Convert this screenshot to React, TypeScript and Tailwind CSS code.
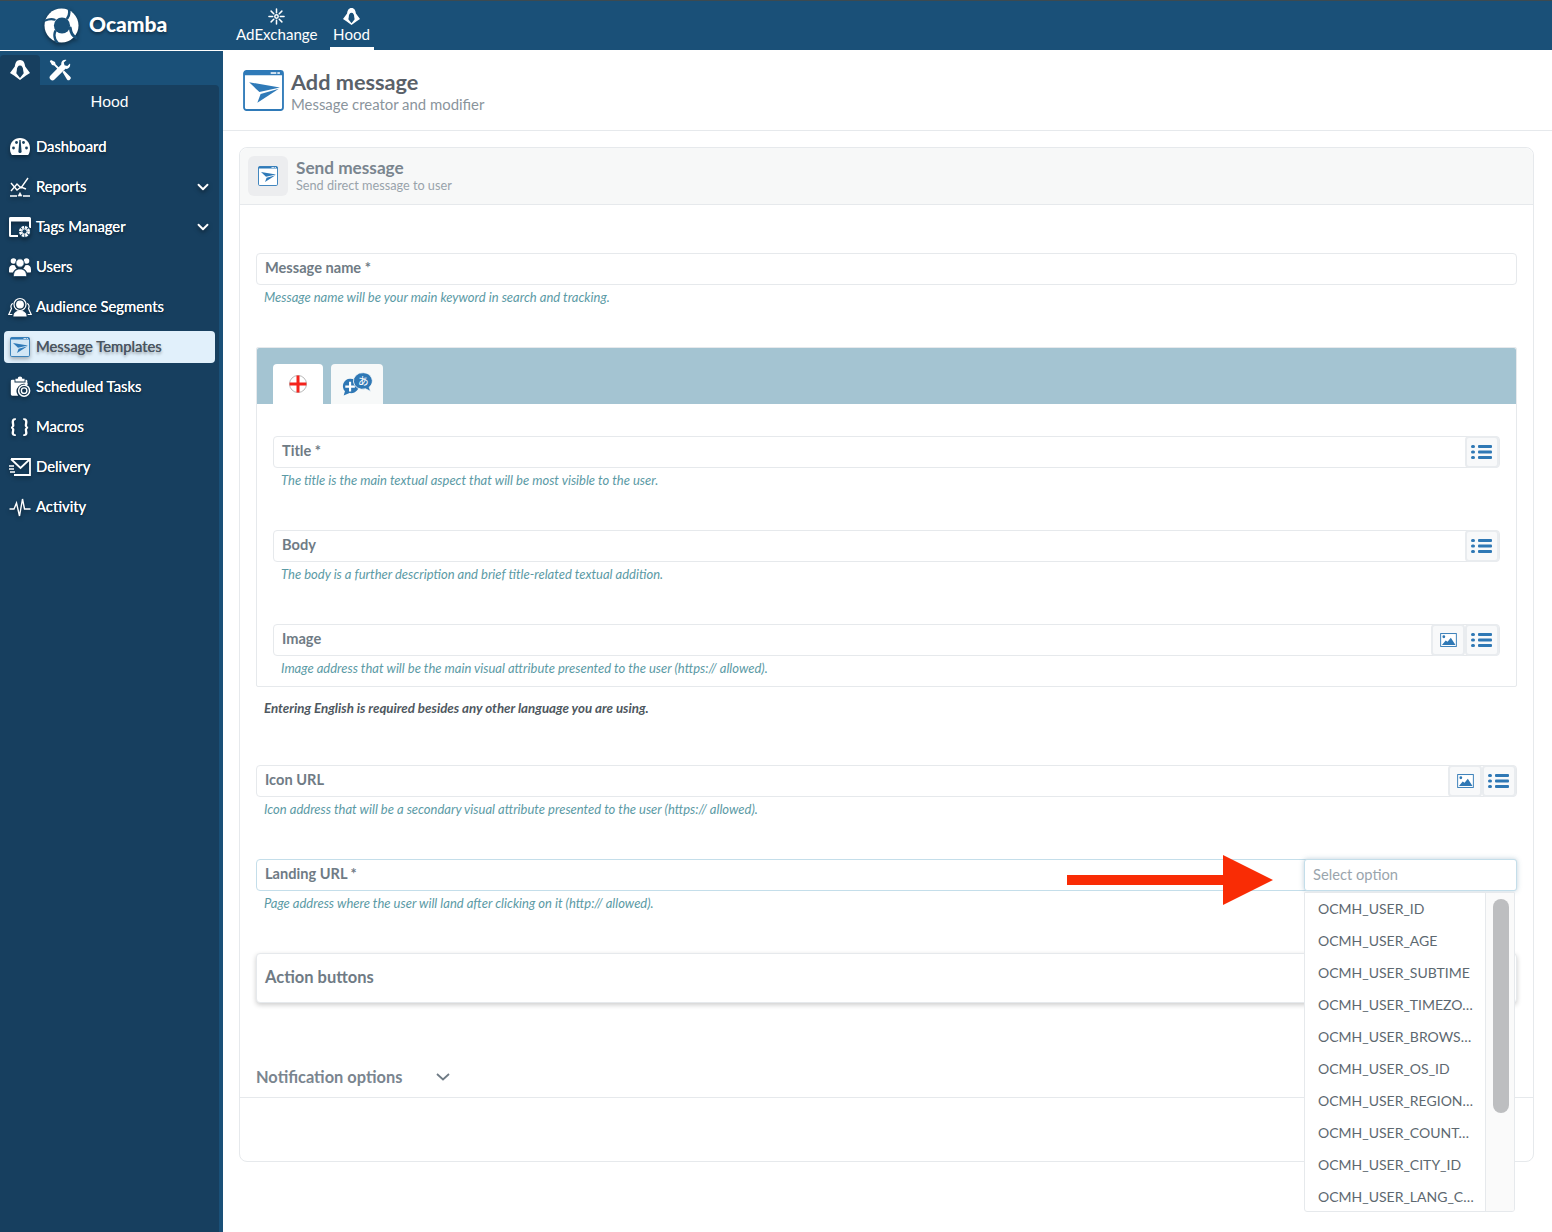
import { ChevronDown } from "lucide-react"
import { ReactNode } from "react"

function HoodIcon({ className = "", face = "#1a5078" }: { className?: string; face?: string }) {
  return (
    <svg viewBox="0 0 20 20" className={className}>
      <path fill="currentColor" d="M10 0C6.600 0 5.300 2.800 4.800 6.500L0 13l4 2.500L10 20l6-4.500 4-2.500-4.800-6.500C14.700 2.800 13.400 0 10 0Z" />
      <path fill={face} d="M10 5.500C8 5.500 6.800 7.500 6.800 10.500L6.300 13.300 10 18l3.700-4.700-.5-2.800C13.200 7.500 12 5.500 10 5.500Z" />
    </svg>
  )
}

function Logo() {
  const bg = "#1a5078"
  return (
    <svg viewBox="0 0 36 36" className="h-[35px] w-[35px] drop-shadow-[0_2px_2px_rgba(0,0,0,0.45)]">
      <circle cx="18" cy="18" r="17.500" fill="#fff" />
      <circle cx="18.500" cy="18" r="8.300" fill={bg} />
      <g fill="none" stroke={bg} strokeLinecap="round">
        <path d="M11 12C8.500 11 5.500 11 1 13" strokeWidth="2.200" />
        <path d="M24 10.500C26 7.500 26.500 4 25.500 1" strokeWidth="2.600" />
        <path d="M27 20.500C27.500 25 29.500 29 33 30.500" strokeWidth="3" />
        <path d="M11.500 24C10 28 11 33 14 36" strokeWidth="2.600" />
      </g>
    </svg>
  )
}

function SendWindow({ className = "", color = "#2f7ab8", fill = "#fff" }: { className?: string; color?: string; fill?: string }) {
  return (
    <svg viewBox="0 0 40 40" className={className}>
      <rect x="1" y="1" width="38" height="38" rx="2.500" fill={fill} stroke={color} strokeWidth="1.800" />
      <path fill={color} d="M1 2.500A1.500 1.500 0 0 1 2.500 1h35A1.500 1.500 0 0 1 39 2.500V5H1Z" />
      <rect x="27" y="2.200" width="5.500" height="1.500" fill="#fff" />
      <rect x="33.500" y="2.200" width="2.500" height="1.500" fill="#fff" />
      <path fill={color} d="M6 12 36 17 16 21.500Z" />
      <path fill={color} d="M14 32 17.200 23.500 35 18.300Z" />
    </svg>
  )
}

function ListIcon() {
  return (
    <svg viewBox="0 0 22 16" className="h-4 w-[22px] text-[#2f78b5]">
      <g fill="currentColor">
        <rect x="0" y="1" width="4" height="3" rx="1.500" />
        <rect x="0" y="6.500" width="4" height="3" rx="1.500" />
        <rect x="0" y="12" width="4" height="3" rx="1.500" />
        <rect x="7" y="1" width="14" height="3" rx="1" />
        <rect x="7" y="6.500" width="14" height="3" rx="1" />
        <rect x="7" y="12" width="14" height="3" rx="1" />
      </g>
    </svg>
  )
}

function ImageIcon() {
  return (
    <svg viewBox="0 0 18 15" className="h-[14px] w-[17px]">
      <rect x=".6" y=".6" width="16.800" height="13.800" fill="#fff" stroke="#2f78b5" strokeWidth="1" />
      <circle cx="4" cy="4" r="1.500" fill="#2f78b5" />
      <path fill="#2f78b5" d="M2 12.800 6 8l2 1.500L11.500 5l5 7.800Z" />
    </svg>
  )
}

function IconButton({ children }: { children: ReactNode }) {
  return (
    <div className="flex h-[32px] w-[34px] shrink-0 items-center justify-center rounded-[4px] border-2 border-[#e9ecef] bg-[#f8f9fa]">
      {children}
    </div>
  )
}

function Field({ label, help, image, list, strong }: { label: string; help: string; image?: boolean; list?: boolean; strong?: boolean }) {
  return (
    <div>
      <div className={`flex h-[32px] items-center rounded-[4px] border ${strong ? "border-[#c4deea]" : "border-[#e6e9ec]"} bg-white`}>
        <span className="flex-1 pb-[3px] pl-[8px] text-[14.600px] font-bold text-[#6f7b85]">{label}</span>
        {image && <IconButton><ImageIcon /></IconButton>}
        {list && <IconButton><ListIcon /></IconButton>}
      </div>
      <p className="mt-[5px] pl-[8px] text-[13px] leading-[15px] text-[#5b9aa5] italic">{help}</p>
    </div>
  )
}

const ic = "h-[22px] w-[22px] shrink-0 drop-shadow-[0_2px_2px_rgba(0,0,0,0.4)]"

const navItems: { label: string; chevron?: boolean; active?: boolean; icon: ReactNode }[] = [
  {
    label: "Dashboard",
    icon: (
      <svg viewBox="0 0 22 20" className={ic}>
        <path fill="#fff" d="M11 1C5 1 1 5.600 1 11.500c0 2.500.6 4.500 1.500 6 .3.400.7.500 1.100.500h14.800c.4 0 .8-.1 1.100-.5.900-1.500 1.500-3.500 1.500-6C21 5.600 17 1 11 1Z" />
        <g fill="#17405f">
          <circle cx="4.500" cy="11" r="1.400" />
          <circle cx="7.500" cy="5.500" r="1.400" />
          <circle cx="14.500" cy="5.500" r="1.400" />
          <circle cx="17.500" cy="11" r="1.400" />
          <path d="M10.400 3h1.200l1 11.500a1.600 1.600 0 1 1-3.200 0Z" />
        </g>
      </svg>
    ),
  },
  {
    label: "Reports",
    chevron: true,
    icon: (
      <svg viewBox="0 0 22 22" className={ic} fill="none" stroke="#fff" strokeWidth="1.400">
        <path d="M2 15l6-7 4 4 7-10" />
        <path d="M2 7l6 7 4-3 5 2" />
        <path d="M1 20h7M14 20h7" strokeWidth="1.600" />
        <path d="M11 16.500 13 20H9Z" fill="#fff" strokeWidth=".6" />
      </svg>
    ),
  },
  {
    label: "Tags Manager",
    chevron: true,
    icon: (
      <svg viewBox="0 0 22 22" className={ic}>
        <path fill="#fff" d="M1.500 1h19A1.500 1.500 0 0 1 22 2.500V12h-2V5.500H2V19h7v2H1.500A1.500 1.500 0 0 1 0 19.500v-17A1.500 1.500 0 0 1 1.500 1Z" />
        <circle cx="15.500" cy="15.500" r="6.500" fill="#17405f" />
        <circle cx="15.500" cy="15.500" r="4.200" fill="none" stroke="#fff" strokeWidth="2.600" strokeDasharray="2.400 .9" />
        <circle cx="15.500" cy="15.500" r="2.600" fill="none" stroke="#fff" strokeWidth="1" />
      </svg>
    ),
  },
  {
    label: "Users",
    icon: (
      <svg viewBox="0 0 22 20" className={ic} fill="#fff">
        <path d="M0 12.500C0 9.500 1.500 8 4 8c.8 0 1.500.2 2 .5.200 1.300 1 2.400 1.800 3-1.800.9-3.200 2.200-3.800 4H1c-.6 0-1-.4-1-1ZM22 12.500C22 9.500 20.500 8 18 8c-.8 0-1.500.2-2 .5-.2 1.300-1 2.400-1.800 3 1.800.9 3.200 2.200 3.800 4h3c.6 0 1-.4 1-1Z" />
        <circle cx="4.500" cy="4" r="2.800" />
        <circle cx="17.500" cy="4" r="2.800" />
        <circle cx="11" cy="6" r="4.200" stroke="#17405f" strokeWidth="1" />
        <path d="M4.500 18.500c0-4 2.500-6.500 6.500-6.500s6.500 2.500 6.500 6.500c0 .8-.5 1-1 1h-11c-.5 0-1-.2-1-1Z" stroke="#17405f" strokeWidth=".8" />
      </svg>
    ),
  },
  {
    label: "Audience Segments",
    icon: (
      <svg viewBox="0 0 24 20" className="h-[22px] w-[24px] shrink-0 drop-shadow-[0_2px_2px_rgba(0,0,0,0.4)]" fill="none" stroke="#fff" strokeWidth="1.200">
        <circle cx="12" cy="7.500" r="6" />
        <circle cx="12" cy="7.500" r="3.300" fill="#fff" />
        <path d="M6 19c0-3 2.500-5 6-5s6 2 6 5Z" fill="#fff" />
        <path d="M5 6.500C2.800 7 2.500 10 3.500 11.500L0.800 17.500h3.500M19 6.500c2.200.5 2.500 3.500 1.500 5l2.700 6h-3.500" />
      </svg>
    ),
  },
  {
    label: "Message Templates",
    active: true,
    icon: <SendWindow fill="#d3e7f5" className="h-[20px] w-[20px] shrink-0 drop-shadow-[0_2px_2px_rgba(0,0,0,0.3)]" />,
  },
  {
    label: "Scheduled Tasks",
    icon: (
      <svg viewBox="0 0 22 24" className={ic} fill="#fff">
        <path d="M6 3h2.500a2.500 2.500 0 0 1 5 0H16v3H6Z" />
        <path d="M2.500 4H5v3h12V4h.5A1.500 1.500 0 0 1 19 5.500V9.500A8 8 0 0 0 9 21.500H2.500A1.500 1.500 0 0 1 1 20V5.500A1.500 1.500 0 0 1 2.500 4Z" />
        <circle cx="15.500" cy="16" r="6" fill="none" stroke="#fff" strokeWidth="1.700" />
        <circle cx="15.500" cy="16" r="3" fill="none" stroke="#fff" strokeWidth="1.500" />
        <path d="M17 10l2-2" stroke="#fff" strokeWidth="2" />
      </svg>
    ),
  },
  {
    label: "Macros",
    icon: <span className={`${ic} text-center text-[19px] leading-[20px] font-black tracking-[1px] whitespace-nowrap text-white`}>{"{ }"}</span>,
  },
  {
    label: "Delivery",
    icon: (
      <svg viewBox="0 0 22 18" className={ic} fill="none" stroke="#fff" strokeWidth="1.800">
        <path d="M2 1h19v16H5M2 1l9.500 9L21 1" />
        <path d="M0 8h5M0 11h5M1 14h5" strokeWidth="1.400" />
      </svg>
    ),
  },
  {
    label: "Activity",
    icon: (
      <svg viewBox="0 0 22 20" className={ic} fill="none" stroke="#fff" strokeWidth="1.400">
        <path d="M.5 12H5l2.500-6 3 13 3-17 2 10h6" />
      </svg>
    ),
  },
]

function Sidebar() {
  return (
    <aside className="flex w-[223px] shrink-0 flex-col bg-[#1a5078] pr-[4px]">
      <div className="flex h-[34px] shrink-0 items-end">
        <div className="flex h-[30px] w-[40px] items-center justify-center rounded-t-[4px] bg-[#173f5f]">
          <HoodIcon className="h-[20px] w-[20px] text-white" face="#173f5f" />
        </div>
        <div className="flex h-[30px] w-[40px] items-center justify-center">
          <svg viewBox="0 0 22 22" className="h-[22px] w-[22px]" fill="#fff">
            <path d="M2 1 0.800 2.200 3 6l2.200.6 6.300 6.300 1.400-1.400L6.600 5.200 6 3Z" />
            <path d="M13.500 13 15 11.500l6 6a2 2 0 0 1 0 3 2 2 0 0 1-3 0Z" />
            <path d="M21 4.500 18.300 7 15.500 6.300 14.800 3.500 17.500 1C14.800.2 11.800 2 12.300 5.500L1.500 16.500a2.800 2.800 0 0 0 4 4L16.500 9.800C20 10.500 21.800 7.200 21 4.500Z" />
          </svg>
        </div>
      </div>
      <div className="flex-1 rounded-tr-[4px] bg-[#173f5f]">
        <div className="pt-[6px] text-center text-[15.500px] leading-[20px] text-white">Hood</div>
        <nav className="mt-[16px] flex flex-col">
          {navItems.map((item) => (
            <div key={item.label} className="flex h-[40px] items-center">
              <div className={`mx-[4px] flex h-[32px] w-full items-center gap-[5px] rounded-[4px] pr-[3px] pl-[5px] ${item.active ? "bg-[#e1f0fb]" : ""}`}>
                <span className="flex w-[22px] shrink-0 items-center justify-center">{item.icon}</span>
                <span
                  className={`flex-1 pb-[2px] text-[14.800px] ${
                    item.active
                      ? "text-[#4a5560] [text-shadow:0_0_0.6px_#4a5560,0_2px_3px_rgba(0,0,0,0.4)]"
                      : "text-white [text-shadow:0_0_0.6px_#fff,0_2px_3px_rgba(0,0,0,0.45)]"
                  }`}
                >
                  {item.label}
                </span>
                {item.chevron && <ChevronDown className="h-[18px] w-[18px] text-white drop-shadow-[0_2px_2px_rgba(0,0,0,0.5)]" strokeWidth={2.500} />}
              </div>
            </div>
          ))}
        </nav>
      </div>
    </aside>
  )
}

const options = [
  "OCMH_USER_ID",
  "OCMH_USER_AGE",
  "OCMH_USER_SUBTIME",
  "OCMH_USER_TIMEZO…",
  "OCMH_USER_BROWS…",
  "OCMH_USER_OS_ID",
  "OCMH_USER_REGION…",
  "OCMH_USER_COUNT…",
  "OCMH_USER_CITY_ID",
  "OCMH_USER_LANG_C…",
]

function LandingDropdown() {
  return (
    <div className="absolute top-0 right-0 z-10 w-[213px]">
      <div className="flex h-[32px] items-center rounded-[3px] border border-[#c4deea] bg-white pb-[2px] pl-[8px] text-[14.700px] text-[#9aa5ad] shadow-[0_0_5px_rgba(70,120,150,0.35)]">
        Select option
      </div>
      <div className="mt-px flex h-[320px] w-[211px] overflow-hidden rounded-b-[3px] border border-[#e6e9ec] bg-white">
        <ul className="w-[181px] shrink-0 border-r border-[#e6e9ec]">
          {options.map((o) => (
            <li key={o} className="h-[32px] pl-[13px] text-[14px] leading-[32px] whitespace-nowrap text-[#5d6870]">{o}</li>
          ))}
        </ul>
        <div className="flex-1 bg-[#fafafa] pt-[6px] pl-[7px]">
          <div className="h-[214px] w-[16px] rounded-full bg-[#bdbec0]" />
        </div>
      </div>
    </div>
  )
}

function RedArrow() {
  return (
    <div className="absolute top-[-4px] left-[811px] z-20 flex items-center">
      <div className="h-[10px] w-[156px] bg-[#f92c05]" />
      <div className="h-0 w-0 border-y-[25px] border-l-[50px] border-y-transparent border-l-[#f92c05]" />
    </div>
  )
}

export default function App() {
  return (
    <div className="flex h-screen w-full flex-col overflow-hidden bg-white font-['Lato',sans-serif]">
      <header className="flex h-[51px] shrink-0 border-t border-b border-t-[#3d4a50] border-b-white bg-[#1a5078]">
        <div className="flex w-[223px] shrink-0 items-center pl-[44px]">
          <Logo />
          <span className="ml-[10px] pb-[4px] text-[21px] font-black text-white [text-shadow:0_2px_3px_rgba(0,0,0,0.4)]">Ocamba</span>
        </div>
        <div className="ml-[13px] flex gap-[12px]">
          <div className="flex flex-col items-center pt-[7px] text-white">
            <svg viewBox="0 0 18 18" className="h-[17px] w-[17px]" stroke="#fff" strokeWidth="1.600" strokeLinecap="round" fill="none">
              <path d="M9 1v4M9 13v4M1 9h4M13 9h4M3.300 3.300l2.800 2.800M11.900 11.900l2.800 2.800M14.700 3.300l-2.800 2.800M6.100 11.900l-2.800 2.800" />
              <circle cx="9" cy="9" r="1.800" />
            </svg>
            <span className="text-[15.100px] leading-[19px]">AdExchange</span>
          </div>
          <div className="flex w-[44px] flex-col items-center border-b-[3px] border-white pt-[7px] text-white">
            <HoodIcon className="h-[17px] w-[17px]" />
            <span className="text-[15.100px] leading-[19px]">Hood</span>
          </div>
        </div>
      </header>

      <div className="flex min-h-0 flex-1">
        <Sidebar />
        <main className="min-w-0 flex-1">
          <div className="flex h-[80px] items-center gap-[7px] border-b border-[#e6e9ec] pb-[1px] pl-[20px]">
            <SendWindow className="h-[41px] w-[41px]" />
            <div className="pt-[3px]">
              <h1 className="text-[21.700px] leading-[24px] font-bold text-[#5a6169]">Add message</h1>
              <p className="text-[14.900px] leading-[20px] text-[#8a949c]">Message creator and modifier</p>
            </div>
          </div>

          <section className="mt-[16px] mr-[18px] ml-[16px] h-[1015px] rounded-[8px] border border-[#e6e9ec]">
            <div className="flex h-[57px] items-center gap-[8px] rounded-t-[8px] border-b border-[#e6e9ec] bg-[#f7f8f8] pl-[8px]">
              <div className="flex h-[40px] w-[40px] items-center justify-center rounded-[6px] bg-[#ecedef]">
                <SendWindow className="h-[20px] w-[20px]" />
              </div>
              <div className="pb-[2px]">
                <div className="text-[17.200px] leading-[20px] font-bold text-[#7a858f]">Send message</div>
                <div className="text-[12.700px] leading-[15px] text-[#99a3ab]">Send direct message to user</div>
              </div>
            </div>

            <div className="px-[16px] pt-[48px]">
              <Field label="Message name *" help="Message name will be your main keyword in search and tracking." />

              <div className="mt-[42px] rounded-[2px] border border-[#e6e9ec]">
                <div className="flex h-[56px] items-end gap-[8px] rounded-t-[2px] bg-[#a4c4d2] pl-[16px]">
                  <div className="flex h-[40px] w-[50px] items-center justify-center rounded-t-[4px] bg-white">
                    <svg viewBox="0 0 18 18" className="h-[18px] w-[18px]">
                      <circle cx="9" cy="9" r="8.500" fill="#fff" stroke="#999" strokeWidth=".7" />
                      <path d="M7.500 .6h3v6.900h6.900v3h-6.900v6.900h-3v-6.900H.6v-3h6.900Z" fill="#f4231c" />
                    </svg>
                  </div>
                  <div className="flex h-[40px] w-[52px] items-center justify-center rounded-t-[4px] bg-[#f7f9f9]">
                    <svg viewBox="0 0 30 22" className="h-[24px] w-[32px]">
                      <path fill="#2f78b5" d="M8.500 6a8 7 0 0 1 4.500 12.700c-1.500.8-3 1-5 .8L2.500 21.800l1.200-4A7 7 0 0 1 8.500 6Z" />
                      <path fill="#fff" d="M7.500 9h2v3.500H13v2H9.500V18h-2v-3.500H4v-2h3.500Z" />
                      <path fill="#2f78b5" stroke="#f7f9f9" strokeWidth=".8" d="M21 .4a8.500 7.800 0 0 1 5.500 13.600l1.300 4-4.800-2.500A8.500 7.800 0 1 1 21 .4Z" />
                      <text x="21" y="11.500" fill="#fff" fontSize="10" textAnchor="middle" fontFamily="'Noto Sans CJK JP',sans-serif">あ</text>
                    </svg>
                  </div>
                </div>
                <div className="flex flex-col gap-[42px] px-[16px] pt-[32px] pb-[10px]">
                  <Field list label="Title *" help="The title is the main textual aspect that will be most visible to the user." />
                  <Field list label="Body" help="The body is a further description and brief title-related textual addition." />
                  <Field image list label="Image" help="Image address that will be the main visual attribute presented to the user (https:// allowed)." />
                </div>
              </div>

              <p className="mt-[13px] pl-[8px] text-[13.300px] leading-[16px] font-bold text-[#4f5860] italic">
                Entering English is required besides any other language you are using.
              </p>

              <div className="mt-[49px]">
                <Field image list label="Icon URL" help="Icon address that will be a secondary visual attribute presented to the user (https:// allowed)." />
              </div>

              <div className="relative mt-[42px]">
                <Field strong label="Landing URL *" help="Page address where the user will land after clicking on it (http:// allowed)." />
                <RedArrow />
                <LandingDropdown />
              </div>

              <div className="mt-[42px] flex h-[50px] items-center rounded-[4px] border border-[#e6e9ec] bg-white pb-[2px] pl-[8px] text-[16.500px] font-bold text-[#6f7b85] shadow-[0_2px_5px_rgba(0,0,0,0.2)]">
                Action buttons
              </div>
            </div>

            <div className="mt-[50px] flex h-[45px] items-center gap-[34px] border-b border-[#e6e9ec] pt-[4px] pl-[16px]">
              <span className="text-[16.400px] font-bold text-[#7a858f]">Notification options</span>
              <svg viewBox="0 0 14 8" className="h-[8px] w-[14px]" fill="none" stroke="#6f7b85" strokeWidth="1.800">
                <path d="M1 1l6 5.500L13 1" />
              </svg>
            </div>
          </section>
        </main>
      </div>
    </div>
  )
}
